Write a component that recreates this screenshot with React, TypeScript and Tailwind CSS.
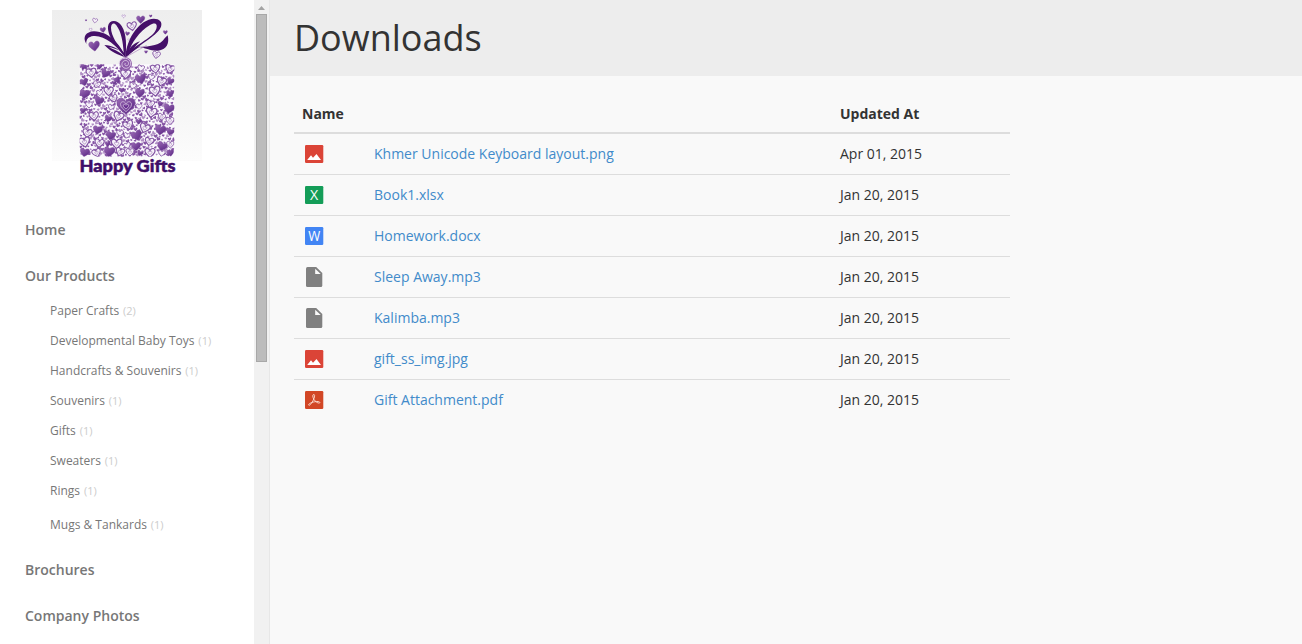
import React from "react";

type FileKind = "image" | "sheet" | "doc" | "file" | "pdf";

const files: { kind: FileKind; name: string; date: string }[] = [
  { kind: "image", name: "Khmer Unicode Keyboard layout.png", date: "Apr 01, 2015" },
  { kind: "sheet", name: "Book1.xlsx", date: "Jan 20, 2015" },
  { kind: "doc", name: "Homework.docx", date: "Jan 20, 2015" },
  { kind: "file", name: "Sleep Away.mp3", date: "Jan 20, 2015" },
  { kind: "file", name: "Kalimba.mp3", date: "Jan 20, 2015" },
  { kind: "image", name: "gift_ss_img.jpg", date: "Jan 20, 2015" },
  { kind: "pdf", name: "Gift Attachment.pdf", date: "Jan 20, 2015" },
];

const categories: [string, number][] = [
  ["Paper Crafts", 2],
  ["Developmental Baby Toys", 1],
  ["Handcrafts & Souvenirs", 1],
  ["Souvenirs", 1],
  ["Gifts", 1],
  ["Sweaters", 1],
  ["Rings", 1],
];

const HEART = "M0 9C-4 5-10 1-10-4C-10-10-3-11 0-5C3-11 10-10 10-4C10 1 4 5 0 9Z";

// x, y, scale, rotation, style: 1 = filled, 0 = outlined
const bowHearts: [number, number, number, number, number][] = [
  [138, 61, 0.3, 0, 1], [165, 62, 0.75, 10, 0], [189, 90, 0.85, -10, 1], [152, 89, 0.45, 0, 0],
  [251, 49, 0.5, 0, 0], [276, 79, 1.4, -10, 0], [302, 59, 1.25, 0, 1], [332, 48, 0.45, 0, 1],
  [262, 101, 0.65, 10, 1], [266, 119, 0.3, 0, 0], [163, 139, 1.6, -8, 1], [376, 97, 0.65, 0, 1],
  [318, 156, 0.5, 0, 1], [349, 165, 1.15, 10, 0],
];

const boxHearts: [number, number, number, number, number][] = [
  [154, 219, 1.5, -8, 0], [196, 221, 1.4, 25, 1], [257, 223, 1.5, 0, 0], [346, 207, 1.4, -8, 0],
  [130, 201, 0.9, 20, 1], [178, 200, 0.9, 0, 1], [303, 205, 1, 10, 0], [390, 208, 1.4, 15, 0],
  [132, 247, 1.2, -12, 1], [170, 254, 1.1, 20, 0], [232, 240, 1, -30, 1], [302, 238, 1.6, -12, 1],
  [334, 232, 0.9, 15, 0], [364, 245, 1.4, 18, 0], [391, 244, 1.1, 20, 1], [206, 274, 1.4, 0, 0],
  [134, 283, 1.5, 10, 1], [179, 279, 0.9, 0, 0], [245, 271, 0.8, 0, 1], [299, 280, 1.4, 8, 1],
  [345, 274, 1.6, -10, 0], [390, 282, 1.1, 0, 1], [278, 258, 1, 20, 0], [222, 249, 0.7, 0, 1],
  [177, 303, 1.4, 20, 1], [221, 296, 1.2, -20, 0], [258, 319, 2.7, 0, 1], [331, 312, 1.2, 12, 0],
  [147, 315, 1, 0, 0], [213, 322, 0.9, 20, 0], [297, 320, 0.9, 0, 0], [360, 312, 0.8, 20, 1],
  [387, 327, 1.6, 10, 1], [129, 333, 0.9, 0, 1], [162, 349, 1.4, -8, 0], [205, 357, 1.1, 12, 1],
  [235, 350, 1.5, 20, 0], [334, 338, 1.6, 10, 0], [365, 351, 1.1, 12, 0], [296, 365, 0.9, 0, 1],
  [265, 376, 1.5, -20, 0], [142, 400, 1.4, 10, 0], [173, 391, 1.4, 10, 1], [212, 408, 1.4, 12, 1],
  [314, 385, 1.5, 20, 0], [361, 391, 1.6, 8, 1], [390, 363, 1.2, 0, 0], [391, 396, 1.1, 20, 1],
  [240, 400, 1, 0, 0], [290, 407, 1.6, -18, 1], [260, 407, 0.9, 20, 0], [134, 427, 1.6, -12, 0],
  [178, 430, 1.4, 8, 0], [230, 432, 1.6, 0, 0], [203, 432, 0.8, 0, 1], [262, 437, 1, -20, 0],
  [328, 425, 1.3, 10, 0], [288, 440, 1.4, 0, 1], [366, 440, 1.5, 20, 1], [391, 434, 1.1, 0, 0],
  [134, 458, 1.4, 10, 1], [170, 459, 1.3, -20, 0], [208, 456, 1.6, 8, 1], [240, 456, 1.3, 20, 0],
  [270, 457, 1.2, 0, 0], [300, 460, 0.9, 20, 1], [330, 459, 1.5, 0, 0], [365, 460, 1, 10, 0],
  [391, 459, 1.1, -10, 1],
];

// Small hearts spread evenly to fill the gaps between the large ones.
const confetti: [number, number, number, number][] = Array.from({ length: 620 }, (_, i) => [
  120 + ((i * 0.7548777) % 1) * 282,
  195 + ((i * 0.5698403) % 1) * 274,
  0.32 + (i % 4) * 0.09,
  ((i * 43) % 90) - 45,
]);

function Heart({ at }: { at: [number, number, number, number, number] }) {
  const [x, y, s, r, solid] = at;
  return (
    <g transform={`translate(${x} ${y}) rotate(${r}) scale(${s})`}>
      <path d={HEART} fill={solid ? "url(#violet)" : "#f7f2fa"} stroke={solid ? "#7b4a9c" : "#8354a3"} strokeWidth={solid ? 0.8 : 2.4} />
      {!solid && s > 1 && <path d={HEART} transform="scale(.4)" fill="none" stroke="#9d78b5" strokeWidth="3" />}
    </g>
  );
}

function Logo() {
  return (
    <svg className="block h-[170px] w-[150px]" viewBox="52 10 150 170" role="img" aria-label="Happy Gifts">
      <defs>
        <linearGradient id="backdrop" x1="0" y1="0" x2="0" y2="1">
          <stop offset="0" stopColor="#eeeeee" />
          <stop offset="0.5" stopColor="#f3f3f3" />
          <stop offset="1" stopColor="#fcfcfc" />
        </linearGradient>
        <linearGradient id="violet" x1="0" y1="0" x2="1" y2="1">
          <stop offset="0" stopColor="#9b6bb5" />
          <stop offset="1" stopColor="#552080" />
        </linearGradient>
        <clipPath id="box">
          <path d="M119 193H403V470H119Z" />
        </clipPath>
      </defs>
      <rect x="52" y="10" width="150" height="151" fill="url(#backdrop)" />
      <g transform="translate(40 0) scale(0.33333)">
        <path d="M119 193H403V470H119Z" fill="#fbf9fd" />
        <g clipPath="url(#box)">
          {confetti.map(([x, y, s, r], i) => (
            <path key={i} d={HEART} transform={`translate(${x} ${y}) rotate(${r}) scale(${s})`} fill={i % 3 ? "#8655a5" : "#b18fc5"} />
          ))}
          {boxHearts.map((at, i) => (
            <Heart key={i} at={at} />
          ))}
          <path d={HEART} transform="translate(258 320) scale(1.65)" fill="none" stroke="#d9c6e3" strokeWidth="1.4" />
          <path d={HEART} transform="translate(258 320) scale(.8)" fill="#6a3192" stroke="#e9dcf0" strokeWidth="2.4" />
        </g>
        {bowHearts.map((at, i) => (
          <Heart key={i} at={at} />
        ))}
        <g fill="#451069">
          <path d="M139 132C126 111 138 95 162 94C207 95 241 133 257 172C228 135 193 105 160 108C145 110 138 118 139 132Z" />
          <path fillRule="evenodd" d="M255 172C239 151 201 113 204 79C207 58 232 57 245 78C261 103 259 140 257 172ZM251 158C249 126 244 96 229 76C222 67 214 70 213 83C213 109 235 137 251 158Z" />
          <path fillRule="evenodd" d="M257 173C256 132 284 75 326 59C350 51 370 62 363 80C354 106 304 127 260 171ZM266 157C291 131 341 112 349 86C354 70 343 66 329 76C298 94 274 130 266 157Z" />
          <path d="M383 106C389 130 380 150 354 152C331 153 316 143 294 141C333 140 362 136 374 115Z" />
          <path d="M254 171C236 164 214 158 193 135C217 137 232 145 236 151C225 146 216 143 207 142C224 149 245 159 254 171Z" />
          <path d="M260 169C264 146 278 131 300 124C290 134 286 140 280 148C288 142 294 139 301 139C283 151 271 159 260 169Z" />
        </g>
        <path d="M258 171L320 136" stroke="#ad87bf" strokeWidth="2" />
        <circle cx="257" cy="191" r="19" fill="#8d5aa8" />
        <path d="M243 201C230 185 243 174 257 175C276 176 277 202 260 205C247 206 241 192 250 184C260 176 271 189 263 196C257 200 251 193 257 189" fill="none" stroke="#e0cfea" strokeWidth="2.5" />
      </g>
      <text x="79.5" y="172" textLength="96" lengthAdjust="spacingAndGlyphs" className="fill-[#3f0d69] stroke-[#3f0d69] font-['Lato'] text-[17px] font-black" strokeWidth="0.5">
        Happy Gifts
      </text>
    </svg>
  );
}

function FileIcon({ kind }: { kind: FileKind }) {
  if (kind === "file") {
    return (
      <svg className="block size-6" viewBox="0 0 24 24">
        <path d="M5.5 2H14.2L20.3 8V20.5Q20.3 22 18.8 22H5.5Q4 22 4 20.5V3.5Q4 2 5.5 2Z" fill="#808080" />
        <path d="M13.2 3.7V9H18.7Z" fill="#fafafa" />
      </svg>
    );
  }
  const fill = { image: "#db4437", sheet: "#149d58", doc: "#4285f4", pdf: "#d24726" }[kind];
  return (
    <svg className="block size-6" viewBox="0 0 24 24">
      <rect x="3" y="3" width="18.3" height="18" rx="1.2" fill={fill} />
      {kind === "image" && <path d="M5.2 18L9 13.3L11 15.8L14.5 12L19 18Z" fill="#fff" />}
      {(kind === "sheet" || kind === "doc") && (
        <text x="12.2" y="17" textAnchor="middle" className="fill-white font-['Open_Sans'] text-[14px]" textLength={kind === "sheet" ? 8.2 : 12} lengthAdjust="spacingAndGlyphs">
          {kind === "sheet" ? "X" : "W"}
        </text>
      )}
      {kind === "pdf" && (
        <path d="M11.5 6.5C13.5 6.2 12.5 10 10.8 13C9.5 15.5 7.6 18 6.7 17.1C6 16.2 9 14.4 12.5 13.8C15.8 13.1 18.5 13.8 17.8 14.7C16.7 16 13.1 13.6 11.7 11.1C10.4 8.6 10.7 6.7 11.5 6.5Z" stroke="#fbd9cd" strokeWidth="1" fill="none" />
      )}
    </svg>
  );
}

function Category({ name, count }: { name: string; count: number }) {
  return (
    <li className="flex h-[30px] items-center whitespace-pre text-[12px]">
      <a>{name}</a>
      <span className="pl-px text-[11px] text-[#cccccc]"> ({count})</span>
    </li>
  );
}

export default function App() {
  return (
    <div className="flex h-[644px] w-[1302px] overflow-hidden bg-[#f9f9f9] font-['Open_Sans',sans-serif] text-[14px] leading-5 text-[#333333]">
      <aside className="flex w-[270px] shrink-0 border-r border-[#e7e7e7] bg-white">
        <div className="w-[254px] shrink-0 pt-[10px] text-[#777777]">
          <div className="pl-[52px]">
            <Logo />
          </div>
          <nav className="pt-[27px] pl-[25px] font-semibold">
            <div className="flex h-[46px] items-center">Home</div>
            <div className="flex h-[46px] items-center">Our Products</div>
            <ul className="-mt-[3px] pl-[25px] font-normal">
              {categories.map(([name, count]) => (
                <Category key={name} name={name} count={count} />
              ))}
              <li className="pt-1">
                <ul>
                  <Category name="Mugs & Tankards" count={1} />
                </ul>
              </li>
            </ul>
            <div className="mt-[7px] flex h-[46px] items-center">Brochures</div>
            <div className="flex h-[46px] items-center">Company Photos</div>
          </nav>
        </div>
        <div className="flex w-[15px] shrink-0 flex-col items-center bg-[#f1f1f1]">
          <svg className="mt-[6px] block h-1 w-[7px] shrink-0" viewBox="0 0 7 4">
            <path d="M0 4L3.5 0L7 4Z" fill="#a3a3a3" />
          </svg>
          <div className="mt-1 h-[348px] w-[11px] shrink-0 border border-[#a8a8a8] bg-[#bcbcbc]" />
        </div>
      </aside>
      <main className="flex-1">
        <header className="flex h-[76px] items-center bg-[#ededed] pl-6">
          <h1 className="text-[36px] leading-10 font-normal">Downloads</h1>
        </header>
        <table className="mt-[19px] ml-6 w-[716px] table-fixed border-collapse text-left">
          <colgroup>
            <col className="w-[72px]" />
            <col className="w-[466px]" />
            <col />
          </colgroup>
          <thead>
            <tr className="h-[38px] border-b-2 border-[#dddddd]">
              <th colSpan={2} className="px-2 py-0 font-bold">Name</th>
              <th className="px-2 py-0 font-bold">Updated At</th>
            </tr>
          </thead>
          <tbody>
            {files.map((file) => (
              <tr key={file.name} className="h-[41px] border-b border-[#dddddd] last:border-b-0">
                <td className="px-2 py-0"><FileIcon kind={file.kind} /></td>
                <td className="px-2 py-0"><a className="text-[#428bca]">{file.name}</a></td>
                <td className="px-2 py-0">{file.date}</td>
              </tr>
            ))}
          </tbody>
        </table>
      </main>
    </div>
  );
}
